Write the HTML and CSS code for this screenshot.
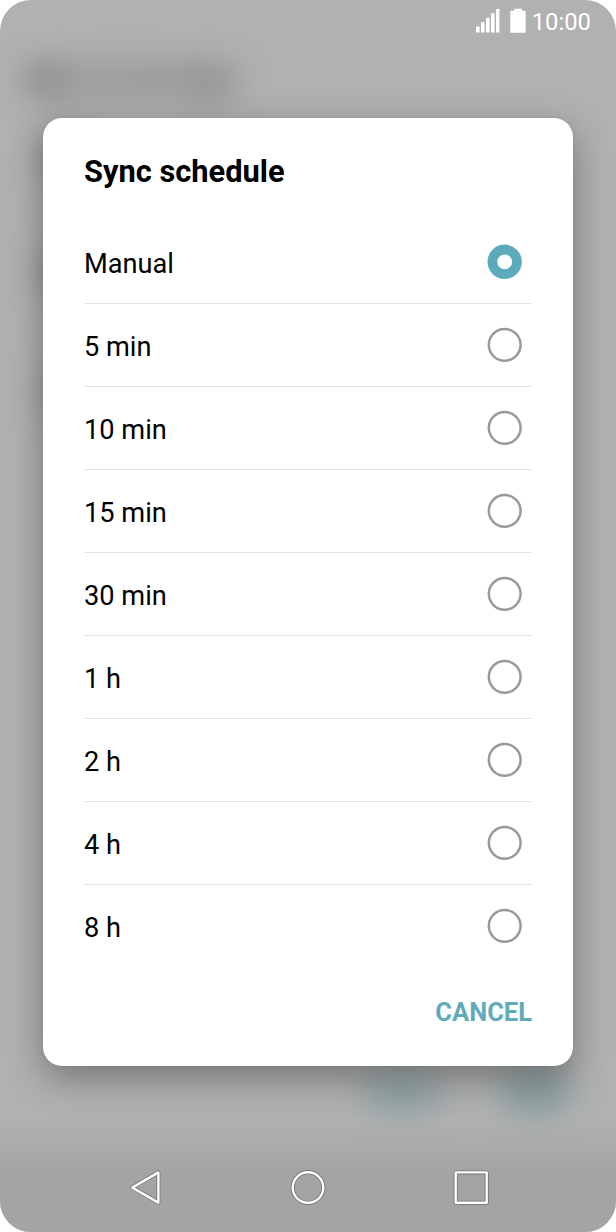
FILE: index.html
```html
<!DOCTYPE html>
<html lang="en">
<head>
<meta charset="utf-8">
<title>Sync schedule</title>
<link rel="stylesheet" href="styles.css">
</head>
<body>
<svg width="0" height="0" class="defs">
  <symbol id="radio-off" viewBox="0 0 36 36"><circle cx="17.700" cy="17.800" r="15.900" fill="none" stroke="#999" stroke-width="2.500"/></symbol>
  <symbol id="radio-on" viewBox="0 0 36 36"><circle cx="17.700" cy="17.800" r="12.300" fill="none" stroke="#5cabbd" stroke-width="9.800"/></symbol>
</svg>
<div class="phone">
  <div class="backdrop">
    <i class="blob heading-a"></i><i class="blob heading-b"></i><i class="blob heading-c"></i>
    <i class="blob side-a"></i><i class="blob side-b"></i><i class="blob side-c"></i>
    <i class="blob action-a"></i><i class="blob action-b"></i>
    <i class="nav-shade"></i>
  </div>
  <header class="status">
    <svg class="signal" width="25" height="25" viewBox="0 0 25 25" fill="#fff"><path d="M1 18.500h3.600v6H1zM6 14.200h3.600v10.300H6zM11 9.800h3.600v14.700H11zM16 5.300h3.600v19.200H16zM21 1h3.400v23.500H21z"/></svg>
    <svg class="battery" width="16" height="25" viewBox="0 0 16 25" fill="#fff"><path d="M4.300 .700h7.700v2h3.700v22H.300v-22h4z"/></svg>
    <span class="clock">10:00</span>
  </header>
  <main class="dialog">
    <h1 class="title">Sync schedule</h1>
    <ul class="options">
      <li class="option"><span>Manual</span><svg class="radio"><use href="#radio-on"/></svg></li>
      <li class="option"><span>5 min</span><svg class="radio"><use href="#radio-off"/></svg></li>
      <li class="option"><span>10 min</span><svg class="radio"><use href="#radio-off"/></svg></li>
      <li class="option"><span>15 min</span><svg class="radio"><use href="#radio-off"/></svg></li>
      <li class="option"><span>30 min</span><svg class="radio"><use href="#radio-off"/></svg></li>
      <li class="option"><span>1 h</span><svg class="radio"><use href="#radio-off"/></svg></li>
      <li class="option"><span>2 h</span><svg class="radio"><use href="#radio-off"/></svg></li>
      <li class="option"><span>4 h</span><svg class="radio"><use href="#radio-off"/></svg></li>
      <li class="option"><span>8 h</span><svg class="radio"><use href="#radio-off"/></svg></li>
    </ul>
    <div class="actions"><button class="cancel">CANCEL</button></div>
  </main>
  <nav class="nav">
    <svg class="key" viewBox="0 0 40 40"><path class="edge" d="M7.300 19.600L33.400 4.400V34.600Z"/><path class="line" d="M7.300 19.600L33.400 4.400V34.600Z"/></svg>
    <svg class="key" viewBox="0 0 40 40"><circle class="edge" cx="20" cy="19.600" r="15.300"/><circle class="line" cx="20" cy="19.600" r="15.300"/></svg>
    <svg class="key" viewBox="0 0 40 40"><path class="edge" d="M4.700 4.400h31v30.400h-31z"/><path class="line" d="M4.700 4.400h31v30.400h-31z"/></svg>
  </nav>
</div>
</body>
</html>
```
FILE: styles.css
```css
* { box-sizing: border-box; }
body { margin: 0; background: #fff; font-family: Roboto, sans-serif; }
.defs { position: absolute; }
.phone {
  position: relative;
  display: flex;
  flex-direction: column;
  width: 616px;
  height: 1232px;
  border-radius: 31px;
  overflow: hidden;
  background: #b1b1b1;
}
.backdrop { position: absolute; inset: 0; }
.blob { position: absolute; border-radius: 50%; filter: blur(15px); background: #8d8d8d; }
.heading-a { left: 22px; top: 61px; width: 54px; height: 38px; }
.heading-b { left: 50px; top: 61px; width: 160px; height: 38px; background: #9b9b9b; }
.heading-c { left: 176px; top: 62px; width: 66px; height: 40px; background: #969696; }
.side-a { left: 44px; top: 126px; width: 42px; height: 58px; }
.side-b { left: 42px; top: 242px; width: 42px; height: 60px; }
.side-c { left: 44px; top: 361px; width: 42px; height: 63px; background: #969696; }
.action-a { left: 360px; top: 1070px; width: 84px; height: 46px; background: #90a2a4; }
.action-b { left: 498px; top: 1067px; width: 74px; height: 50px; background: #8b9ea0; }
.nav-shade {
  position: absolute;
  inset: auto 0 0;
  height: 112px;
  background: linear-gradient(rgba(163, 164, 166, 0), #a3a4a6 52px);
}
.status {
  position: relative;
  display: flex;
  align-items: flex-start;
  height: 118px;
  padding: 8px 25px 0 0;
  justify-content: flex-end;
  color: #fff;
}
.battery { margin-left: 10px; }
.clock { margin-left: 6px; font-size: 23.8px; line-height: 28px; }
.dialog {
  position: relative;
  display: flex;
  flex-direction: column;
  height: 948px;
  margin: 0 43px;
  padding: 0 41px;
  border-radius: 19px;
  background: #fff;
  box-shadow: 0 12px 36px rgba(0, 0, 0, .34), 0 0 2px rgba(0, 0, 0, .1);
}
.title { margin: 0; padding-top: 36px; height: 103px; font-size: 30.8px; line-height: 36px; font-weight: 700; color: #000; }
.options { margin: 0; padding: 0; list-style: none; }
.option {
  display: flex;
  align-items: center;
  justify-content: space-between;
  height: 83px;
  padding: 0 9px 0 0;
  border-bottom: 1px solid #e2e2e2;
  font-size: 27.2px;
  line-height: 32px;
  color: #000;
}
.option span { padding-top: 3px; }
.option:last-child { border-bottom-color: transparent; }
.radio { width: 36px; height: 36px; margin-bottom: 1px; }
.actions { display: flex; justify-content: flex-end; padding-top: 29px; }
.cancel { padding: 0; border: 0; background: none; color: #5fabb9; font: 700 25.5px/30px Roboto, sans-serif; }
.nav { position: relative; display: flex; justify-content: space-between; padding: 102px 125px 0 125px; }
.key { width: 40px; height: 40px; fill: none; stroke-linejoin: round; }
.edge { stroke: #707274; stroke-width: 4; }
.line { stroke: #fff; stroke-width: 2.400; }
```
